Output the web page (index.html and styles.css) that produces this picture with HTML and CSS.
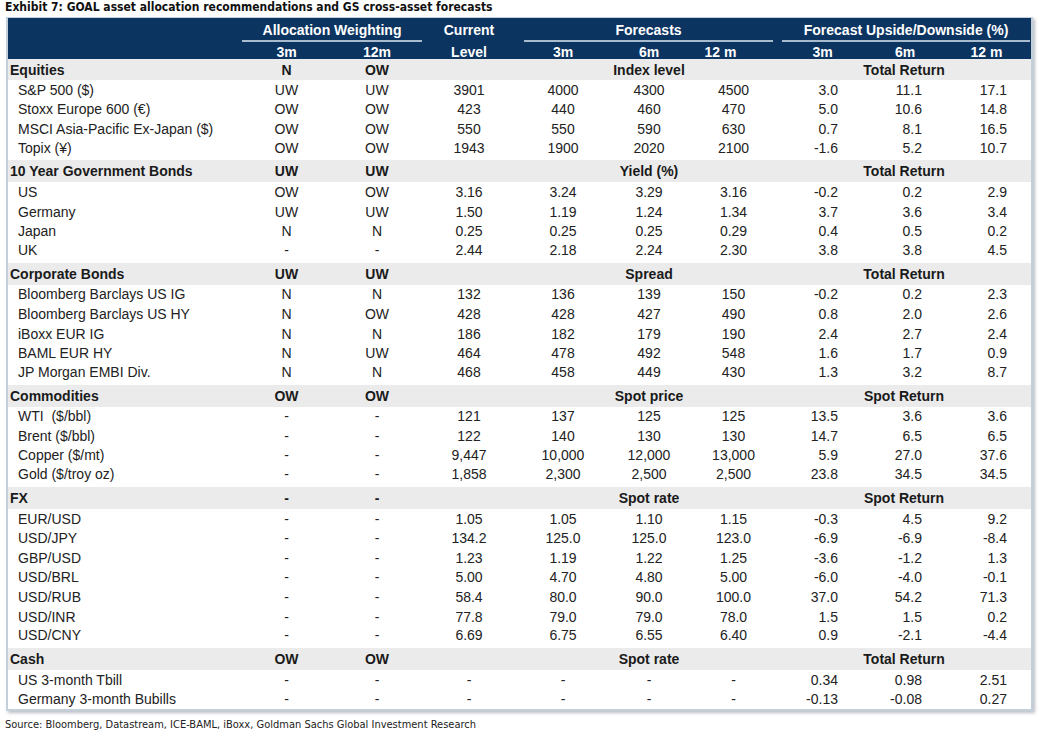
FILE: index.html
```html
<!DOCTYPE html>
<html>
<head>
<meta charset="utf-8">
<link rel="stylesheet" href="styles.css">
</head>
<body>
<div class="title">Exhibit 7: GOAL asset allocation recommendations and GS cross-asset forecasts</div>
<div class="panel">
<table class="grid">
<colgroup>
<col class="c-label"><col class="c-a3"><col class="c-a12"><col class="c-cur"><col class="c-f3"><col class="c-f6"><col class="c-f12"><col class="c-u3"><col class="c-u6"><col class="c-u12">
</colgroup>
<thead>
<tr class="h1">
<th></th>
<th colspan="2" class="grp"><div class="u u-alloc">Allocation Weighting</div></th>
<th class="cur">Current</th>
<th colspan="3" class="grp"><div class="u u-fc">Forecasts</div></th>
<th colspan="3" class="grp"><div class="u u-up">Forecast Upside/Downside (%)</div></th>
</tr>
<tr class="h2">
<th></th>
<th>3m</th><th>12m</th><th class="cur">Level</th>
<th class="hf3">3m</th><th class="hf6">6m</th><th class="hf12">12 m</th>
<th class="hu3">3m</th><th class="hu6">6m</th><th class="hu12">12 m</th>
</tr>
</thead>
<tbody>
<tr class="sec first"><td class="lab">Equities</td><td>N</td><td>OW</td><td></td><td></td><td class="mid">Index level</td><td></td><td></td><td class="mid">Total Return</td><td></td></tr>
<tr><td class="lab">S&amp;P 500 ($)</td><td>UW</td><td>UW</td><td>3901</td><td>4000</td><td>4300</td><td>4500</td><td class="r">3.0</td><td class="r">11.1</td><td class="r">17.1</td></tr>
<tr><td class="lab">Stoxx Europe 600 (€)</td><td>OW</td><td>OW</td><td>423</td><td>440</td><td>460</td><td>470</td><td class="r">5.0</td><td class="r">10.6</td><td class="r">14.8</td></tr>
<tr><td class="lab">MSCI Asia-Pacific Ex-Japan ($)</td><td>OW</td><td>OW</td><td>550</td><td>550</td><td>590</td><td>630</td><td class="r">0.7</td><td class="r">8.1</td><td class="r">16.5</td></tr>
<tr><td class="lab">Topix (¥)</td><td>OW</td><td>OW</td><td>1943</td><td>1900</td><td>2020</td><td>2100</td><td class="r">-1.6</td><td class="r">5.2</td><td class="r">10.7</td></tr>

<tr class="sec"><td class="lab">10 Year Government Bonds</td><td>UW</td><td>UW</td><td></td><td></td><td class="mid">Yield (%)</td><td></td><td></td><td class="mid">Total Return</td><td></td></tr>
<tr><td class="lab">US</td><td>OW</td><td>OW</td><td>3.16</td><td>3.24</td><td>3.29</td><td>3.16</td><td class="r">-0.2</td><td class="r">0.2</td><td class="r">2.9</td></tr>
<tr><td class="lab">Germany</td><td>UW</td><td>UW</td><td>1.50</td><td>1.19</td><td>1.24</td><td>1.34</td><td class="r">3.7</td><td class="r">3.6</td><td class="r">3.4</td></tr>
<tr><td class="lab">Japan</td><td>N</td><td>N</td><td>0.25</td><td>0.25</td><td>0.25</td><td>0.29</td><td class="r">0.4</td><td class="r">0.5</td><td class="r">0.2</td></tr>
<tr><td class="lab">UK</td><td>-</td><td>-</td><td>2.44</td><td>2.18</td><td>2.24</td><td>2.30</td><td class="r">3.8</td><td class="r">3.8</td><td class="r">4.5</td></tr>

<tr class="sec"><td class="lab">Corporate Bonds</td><td>UW</td><td>UW</td><td></td><td></td><td class="mid">Spread</td><td></td><td></td><td class="mid">Total Return</td><td></td></tr>
<tr><td class="lab">Bloomberg Barclays US IG</td><td>N</td><td>N</td><td>132</td><td>136</td><td>139</td><td>150</td><td class="r">-0.2</td><td class="r">0.2</td><td class="r">2.3</td></tr>
<tr><td class="lab">Bloomberg Barclays US HY</td><td>N</td><td>OW</td><td>428</td><td>428</td><td>427</td><td>490</td><td class="r">0.8</td><td class="r">2.0</td><td class="r">2.6</td></tr>
<tr><td class="lab">iBoxx EUR IG</td><td>N</td><td>N</td><td>186</td><td>182</td><td>179</td><td>190</td><td class="r">2.4</td><td class="r">2.7</td><td class="r">2.4</td></tr>
<tr><td class="lab">BAML EUR HY</td><td>N</td><td>UW</td><td>464</td><td>478</td><td>492</td><td>548</td><td class="r">1.6</td><td class="r">1.7</td><td class="r">0.9</td></tr>
<tr><td class="lab">JP Morgan EMBI Div.</td><td>N</td><td>N</td><td>468</td><td>458</td><td>449</td><td>430</td><td class="r">1.3</td><td class="r">3.2</td><td class="r">8.7</td></tr>

<tr class="sec"><td class="lab">Commodities</td><td>OW</td><td>OW</td><td></td><td></td><td class="mid">Spot price</td><td></td><td></td><td class="mid">Spot Return</td><td></td></tr>
<tr><td class="lab">WTI&nbsp; ($/bbl)</td><td>-</td><td>-</td><td>121</td><td>137</td><td>125</td><td>125</td><td class="r">13.5</td><td class="r">3.6</td><td class="r">3.6</td></tr>
<tr><td class="lab">Brent ($/bbl)</td><td>-</td><td>-</td><td>122</td><td>140</td><td>130</td><td>130</td><td class="r">14.7</td><td class="r">6.5</td><td class="r">6.5</td></tr>
<tr><td class="lab">Copper ($/mt)</td><td>-</td><td>-</td><td>9,447</td><td>10,000</td><td>12,000</td><td>13,000</td><td class="r">5.9</td><td class="r">27.0</td><td class="r">37.6</td></tr>
<tr><td class="lab">Gold ($/troy oz)</td><td>-</td><td>-</td><td>1,858</td><td>2,300</td><td>2,500</td><td>2,500</td><td class="r">23.8</td><td class="r">34.5</td><td class="r">34.5</td></tr>

<tr class="sec"><td class="lab">FX</td><td>-</td><td>-</td><td></td><td></td><td class="mid">Spot rate</td><td></td><td></td><td class="mid">Spot Return</td><td></td></tr>
<tr><td class="lab">EUR/USD</td><td>-</td><td>-</td><td>1.05</td><td>1.05</td><td>1.10</td><td>1.15</td><td class="r">-0.3</td><td class="r">4.5</td><td class="r">9.2</td></tr>
<tr><td class="lab">USD/JPY</td><td>-</td><td>-</td><td>134.2</td><td>125.0</td><td>125.0</td><td>123.0</td><td class="r">-6.9</td><td class="r">-6.9</td><td class="r">-8.4</td></tr>
<tr><td class="lab">GBP/USD</td><td>-</td><td>-</td><td>1.23</td><td>1.19</td><td>1.22</td><td>1.25</td><td class="r">-3.6</td><td class="r">-1.2</td><td class="r">1.3</td></tr>
<tr><td class="lab">USD/BRL</td><td>-</td><td>-</td><td>5.00</td><td>4.70</td><td>4.80</td><td>5.00</td><td class="r">-6.0</td><td class="r">-4.0</td><td class="r">-0.1</td></tr>
<tr><td class="lab">USD/RUB</td><td>-</td><td>-</td><td>58.4</td><td>80.0</td><td>90.0</td><td>100.0</td><td class="r">37.0</td><td class="r">54.2</td><td class="r">71.3</td></tr>
<tr><td class="lab">USD/INR</td><td>-</td><td>-</td><td>77.8</td><td>79.0</td><td>79.0</td><td>78.0</td><td class="r">1.5</td><td class="r">1.5</td><td class="r">0.2</td></tr>
<tr><td class="lab">USD/CNY</td><td>-</td><td>-</td><td>6.69</td><td>6.75</td><td>6.55</td><td>6.40</td><td class="r">0.9</td><td class="r">-2.1</td><td class="r">-4.4</td></tr>

<tr class="sec"><td class="lab">Cash</td><td>OW</td><td>OW</td><td></td><td></td><td class="mid">Spot rate</td><td></td><td></td><td class="mid">Total Return</td><td></td></tr>
<tr><td class="lab">US 3-month Tbill</td><td>-</td><td>-</td><td>-</td><td>-</td><td>-</td><td>-</td><td class="r">0.34</td><td class="r">0.98</td><td class="r">2.51</td></tr>
<tr><td class="lab">Germany 3-month Bubills</td><td>-</td><td>-</td><td>-</td><td>-</td><td>-</td><td>-</td><td class="r">-0.13</td><td class="r">-0.08</td><td class="r">0.27</td></tr>
</tbody>
</table>
</div>
<div class="source">Source: Bloomberg, Datastream, ICE-BAML, iBoxx, Goldman Sachs Global Investment Research</div>
</body>
</html>
```

FILE: styles.css
```css
html, body {
  margin: 0;
  padding: 0;
  background: #ffffff;
}
body {
  padding: 0 0 0 5px;
  color: #1e1e1e;
}
.title {
  font-family: "DejaVu Sans Condensed", "DejaVu Sans", sans-serif;
  font-stretch: condensed;
  font-weight: bold;
  font-size: 12px;
  line-height: 15px;
  height: 17px;
  color: #111;
  white-space: nowrap;
}
.panel {
  margin-left: 1px;
  width: 1023px;
  border: 2px solid #c3cfdb;
  border-top-width: 1px;
  box-shadow: 2px 2px 3px rgba(60, 70, 90, 0.35);
  background: #fff;
}
.grid {
  border-collapse: collapse;
  table-layout: fixed;
  width: 1023px;
  font-family: "Liberation Sans", Arial, sans-serif;
  font-size: 14px;
}
.grid th,
.grid td {
  box-sizing: border-box;
}
.c-label { width: 233px; }
.c-a3 { width: 91px; }
.c-a12 { width: 90px; }
.c-cur { width: 94px; }
.c-f3 { width: 90px; }
.c-f6 { width: 86px; }
.c-f12 { width: 83px; }
.c-u3 { width: 87px; }
.c-u6 { width: 84px; }
.c-u12 { width: 85px; }

thead th {
  background: #0b3461;
  color: #ffffff;
  font-weight: bold;
  padding: 0;
  text-align: center;
  white-space: nowrap;
  line-height: 16px;
}
.h1 th {
  height: 24px;
  vertical-align: bottom;
}
.h1 th.cur {
  padding-bottom: 4px;
}
.u {
  border-bottom: 2px solid #a9bcce;
  padding-bottom: 2px;
}
.u-alloc { margin: 0 0 0 1px; }
.u-fc { margin: 0 2px 0 8px; }
.u-up { margin: 0 1px 0 7px; }
.h2 th {
  height: 17px;
  line-height: 14px;
  padding-top: 3px;
  vertical-align: top;
}
.h2 .hf3 { padding-left: 4px; }
.h2 .hf12 { padding-right: 26px; }
.h2 .hu3 { padding-left: 8px; }
.h2 .hu6 { padding-left: 2px; }
.h2 .hu12 { padding-right: 4px; }

tbody td {
  padding: 0;
  height: 19.58px;
  line-height: 16px;
  text-align: center;
  white-space: nowrap;
  vertical-align: middle;
  color: #222;
}
tbody td.lab {
  text-align: left;
  padding-left: 10px;
}
tbody td.r {
  text-align: right;
  padding-right: 24px;
}
tbody td:nth-child(5) { padding-left: 4px; }

tr.sec td {
  background: #ebebeb;
  font-weight: bold;
  height: 24px;
  border-top: 4px solid #ffffff;
  color: #1a1a1a;
}
tr.sec.first td {
  border-top: 0;
  height: 21px;
}
tr.sec td.lab {
  padding-left: 2px;
}
tr.sec td.mid {
  overflow: visible;
}
.source {
  font-family: "DejaVu Sans Condensed", "DejaVu Sans", sans-serif;
  font-stretch: condensed;
  font-size: 11px;
  line-height: 14px;
  margin-top: 7px;
  color: #222;
  white-space: nowrap;
}
```
